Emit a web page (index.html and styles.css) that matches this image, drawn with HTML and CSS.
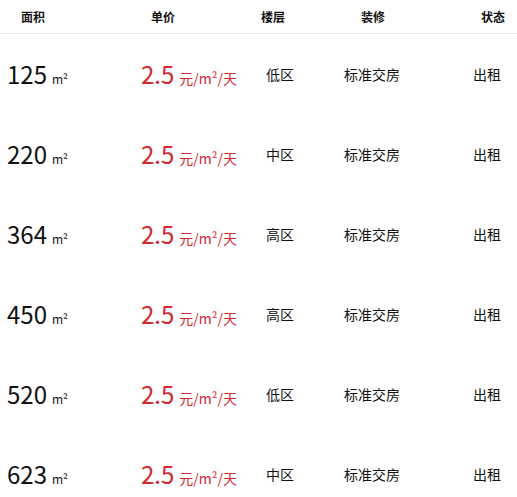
FILE: index.html
```html
<!DOCTYPE html>
<html lang="zh-CN">
<head>
<meta charset="utf-8">
<link rel="stylesheet" href="styles.css">
</head>
<body>
<div class="list">
  <div class="head">
    <div>面积</div><div>单价</div><div>楼层</div><div>装修</div><div>状态</div>
  </div>
  <div class="row">
    <div class="area"><span class="num">125</span><span class="unit">m²</span></div>
    <div class="price"><span class="num">2.5</span><span class="unit">元/m²/天</span></div>
    <div>低区</div><div>标准交房</div><div>出租</div>
  </div>
  <div class="row">
    <div class="area"><span class="num">220</span><span class="unit">m²</span></div>
    <div class="price"><span class="num">2.5</span><span class="unit">元/m²/天</span></div>
    <div>中区</div><div>标准交房</div><div>出租</div>
  </div>
  <div class="row">
    <div class="area"><span class="num">364</span><span class="unit">m²</span></div>
    <div class="price"><span class="num">2.5</span><span class="unit">元/m²/天</span></div>
    <div>高区</div><div>标准交房</div><div>出租</div>
  </div>
  <div class="row">
    <div class="area"><span class="num">450</span><span class="unit">m²</span></div>
    <div class="price"><span class="num">2.5</span><span class="unit">元/m²/天</span></div>
    <div>高区</div><div>标准交房</div><div>出租</div>
  </div>
  <div class="row">
    <div class="area"><span class="num">520</span><span class="unit">m²</span></div>
    <div class="price"><span class="num">2.5</span><span class="unit">元/m²/天</span></div>
    <div>低区</div><div>标准交房</div><div>出租</div>
  </div>
  <div class="row">
    <div class="area"><span class="num">623</span><span class="unit">m²</span></div>
    <div class="price"><span class="num">2.5</span><span class="unit">元/m²/天</span></div>
    <div>中区</div><div>标准交房</div><div>出租</div>
  </div>
</div>
</body>
</html>
```
FILE: styles.css
```css
html, body {
  margin: 0;
  padding: 0;
  background: #fff;
}
body {
  font-family: "Noto Sans CJK SC", "Noto Sans", sans-serif;
  color: #111;
  width: 517px;
}
.head {
  display: grid;
  grid-template-columns: 130px 110px 100px 120px 1fr;
  padding-left: 21px;
  height: 33px;
  align-items: center;
  border-bottom: 1px solid #e6e6e6;
  font-size: 12px;
  font-weight: bold;
  line-height: 1;
  white-space: nowrap;
}
.row {
  display: grid;
  grid-template-columns: 134px 125px 78px 129px 1fr;
  padding-left: 7px;
  height: 80px;
  align-items: center;
  font-size: 14px;
  line-height: 1;
  white-space: nowrap;
}
.num {
  font-size: 24px;
}
.area .unit {
  font-size: 12px;
  margin-left: 5px;
}
.price {
  color: #d0282e;
}
.price .unit {
  font-size: 14px;
  margin-left: 5px;
}
```
